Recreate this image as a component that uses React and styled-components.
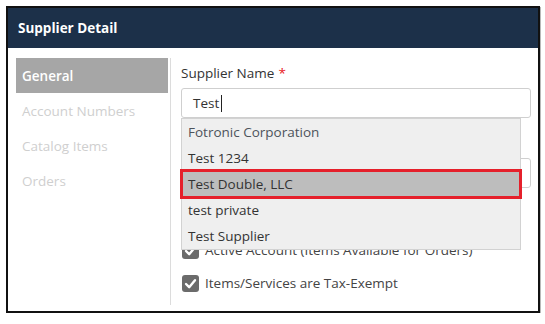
import React from "react";
import styled, { createGlobalStyle } from "styled-components";

const GlobalStyle = createGlobalStyle`
  body {
    margin: 0;
    background: #fff;
    font-family: "Open Sans", "Liberation Sans", sans-serif;
  }
`;

const Frame = styled.div`
  margin: 6px 0 0 6px;
  width: 534px;
  height: 307px;
  box-sizing: border-box;
  border: 2px solid #111;
  box-shadow: 1px 1px 0 #b8b8b8;
  display: flex;
  flex-direction: column;
`;

const Header = styled.div`
  height: 40px;
  flex-shrink: 0;
  background: #1c3049;
  color: #fff;
  display: flex;
  align-items: center;
  padding-left: 10px;
  font-size: 13.5px;
  font-weight: 700;
`;

const Body = styled.div`
  flex: 1;
  display: flex;
  padding: 10px 7px 17px 8px;
`;

const Sidebar = styled.nav`
  width: 152px;
  margin-right: 2px;
  display: flex;
  flex-direction: column;
`;

const NavItem = styled.div`
  height: 35px;
  display: flex;
  align-items: center;
  padding-left: 6px;
  font-size: 13.5px;
  font-weight: ${(p) => (p.$active ? 600 : 400)};
  color: ${(p) => (p.$active ? "#fff" : "#cfcfcf")};
  background: ${(p) => (p.$active ? "#a6a6a6" : "transparent")};
`;

const Content = styled.section`
  flex: 1;
  position: relative;
  border-left: 1px solid #dcdcdc;
  padding: 6px 0 0 10px;
`;

const Field = styled.div`
  margin-bottom: ${(p) => p.$gap || 16}px;
`;

const Label = styled.div`
  font-size: 13.5px;
  line-height: 18px;
  color: #333;
  margin-bottom: 6px;
`;

const Required = styled.span`
  color: #e8151b;
  margin-left: 4px;
`;

const Input = styled.div`
  height: 30px;
  box-sizing: border-box;
  border: 1px solid #cfcfcf;
  border-radius: 3px;
  display: flex;
  align-items: center;
  padding-left: 11px;
  font-size: 13.5px;
  color: #333;
`;

const Caret = styled.span`
  display: inline-block;
  width: 1px;
  height: 17px;
  background: #222;
  margin-left: 2px;
`;

const CheckRow = styled.label`
  height: 22px;
  margin-bottom: 11px;
  display: flex;
  align-items: center;
  gap: 6px;
  padding-left: 1px;
  font-size: 13.5px;
  color: #444;
`;

const Dropdown = styled.ul`
  position: absolute;
  top: 60px;
  left: 10px;
  width: 340px;
  margin: 0;
  padding: 0;
  list-style: none;
  box-sizing: border-box;
  background: #efefef;
  border: 1px solid #d2d2d2;
  z-index: 2;
`;

const Option = styled.li`
  height: 26px;
  display: flex;
  align-items: center;
  padding-left: 6px;
  font-size: 13.5px;
  color: ${(p) => (p.$muted ? "#4d535b" : "#333")};
  background: ${(p) => (p.$selected ? "#bdbdbd" : "transparent")};
  outline: ${(p) => (p.$selected ? "3px solid #e5202b" : "none")};
  outline-offset: -1px;
  position: relative;
`;

function CheckIcon() {
  return (
    <svg width="17" height="17" viewBox="0 0 17 17">
      <rect x="0" y="0" width="17" height="17" rx="3" fill="#6b6b6b" />
      <path d="M4 9 L7.2 12.2 L13 5.2" stroke="#fff" strokeWidth="2.4" fill="none" strokeLinecap="round" strokeLinejoin="round" />
    </svg>
  );
}

const options = [
  { name: "Fotronic Corporation", muted: true },
  { name: "Test 1234" },
  { name: "Test Double, LLC", selected: true },
  { name: "test private" },
  { name: "Test Supplier" },
];

export default function App() {
  return (
    <>
      <GlobalStyle />
      <Frame>
        <Header>Supplier Detail</Header>
        <Body>
          <Sidebar>
            <NavItem $active>General</NavItem>
            <NavItem>Account Numbers</NavItem>
            <NavItem>Catalog Items</NavItem>
            <NavItem>Orders</NavItem>
          </Sidebar>
          <Content>
            <Field>
              <Label>
                Supplier Name<Required>*</Required>
              </Label>
              <Input>
                Test<Caret />
              </Input>
            </Field>
            <Field $gap={51}>
              <Label>Supplier Code</Label>
              <Input />
            </Field>
            <CheckRow>
              <CheckIcon />
              Active Account (Items Available for Orders)
            </CheckRow>
            <CheckRow>
              <CheckIcon />
              Items/Services are Tax-Exempt
            </CheckRow>
            <Dropdown>
              {options.map((o) => (
                <Option key={o.name} $muted={o.muted} $selected={o.selected}>
                  {o.name}
                </Option>
              ))}
            </Dropdown>
          </Content>
        </Body>
      </Frame>
    </>
  );
}
